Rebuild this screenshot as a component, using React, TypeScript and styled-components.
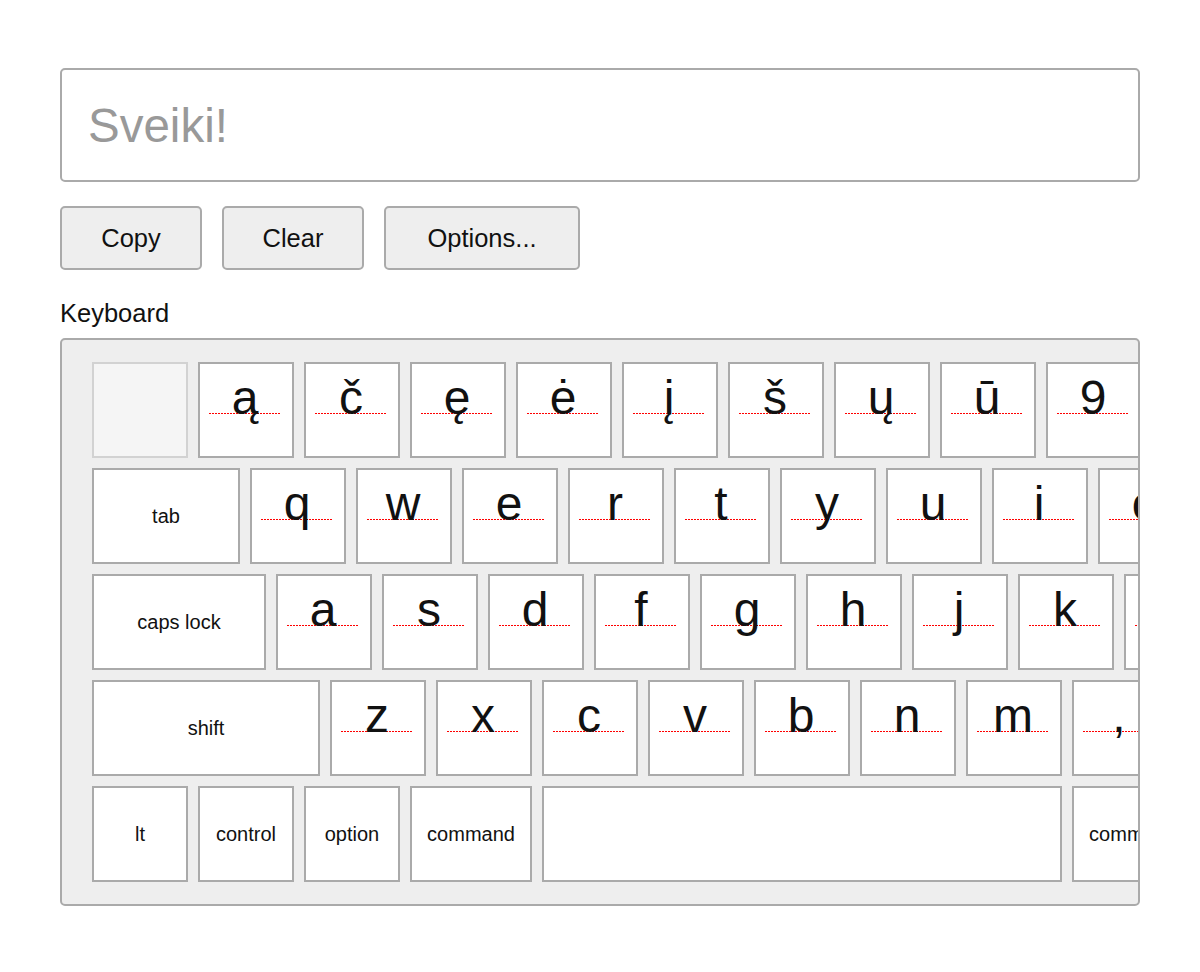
import React from "react";
import styled, { createGlobalStyle } from "styled-components";

type KeyDef = {
  label: string;
  width?: number;
  char?: boolean;
  blank?: boolean;
};

const GlobalStyle = createGlobalStyle`
  body {
    margin: 0;
    background: #fff;
    font-family: "Liberation Sans", Arial, Helvetica, sans-serif;
    color: #111;
  }
`;

const Page = styled.div`
  padding: 68px 60px;
  width: 1080px;
`;

const TextBox = styled.input`
  box-sizing: border-box;
  display: block;
  width: 100%;
  height: 114px;
  padding: 0 26px;
  border: 2px solid #aaa;
  border-radius: 5px;
  font-family: inherit;
  font-size: 47.5px;
  color: #111;
  outline: none;

  &::placeholder {
    color: #999;
  }
`;

const Toolbar = styled.div`
  display: flex;
  gap: 20px;
  margin-top: 24px;
`;

const ActionButton = styled.button<{ $w: number }>`
  box-sizing: border-box;
  width: ${(p) => p.$w}px;
  height: 64px;
  background: #eee;
  border: 2px solid #aaa;
  border-radius: 5px;
  font-family: inherit;
  font-size: 25.5px;
  color: #111;
  padding: 0;
  cursor: pointer;
`;

const SectionLabel = styled.div`
  margin-top: 28px;
  font-size: 25.5px;
  line-height: 30px;
`;

const KeyboardBox = styled.div`
  box-sizing: border-box;
  margin-top: 10px;
  width: 100%;
  padding: 22px 30px;
  background: #eee;
  border: 2px solid #aaa;
  border-radius: 5px;
  overflow: hidden;
  display: flex;
  flex-direction: column;
  gap: 10px;
`;

const KeyRow = styled.div`
  display: flex;
  gap: 10px;
`;

const Key = styled.div<{ $w: number; $char?: boolean; $blank?: boolean }>`
  box-sizing: border-box;
  flex: 0 0 auto;
  width: ${(p) => p.$w}px;
  height: 96px;
  background: ${(p) => (p.$blank ? "#f5f5f5" : "#fff")};
  border: 2px solid ${(p) => (p.$blank ? "#d2d2d2" : "#aaa")};
  display: flex;
  flex-direction: column;
  align-items: ${(p) => (p.$char ? "flex-start" : "center")};
  justify-content: ${(p) => (p.$char ? "flex-start" : "center")};
  font-size: 20px;
  white-space: nowrap;
`;

// the dotted red rule sits right on the glyph baseline
const KeyChar = styled.span`
  display: block;
  width: 72px;
  margin: 17px 0 0 9px;
  font-size: 48px;
  line-height: 33px;
  height: 33px;
  text-align: center;
  color: #111;
  background: linear-gradient(90deg, #f00 2px, transparent 2px) repeat-x
    left bottom / 3px 1px;
`;

const chars = (s: string): KeyDef[] =>
  Array.from(s).map((c) => ({ label: c, char: true }));

// only the keys that show before the box clips the right side
const rows: KeyDef[][] = [
  [{ label: "", blank: true }, ...chars("ąčęėįšųū9")],
  [{ label: "tab", width: 148 }, ...chars("qwertyuio")],
  [{ label: "caps lock", width: 174 }, ...chars("asdfghjkl")],
  [{ label: "shift", width: 228 }, ...chars("zxcvbnm,")],
  [
    { label: "lt" },
    { label: "control" },
    { label: "option" },
    { label: "command", width: 122 },
    { label: "", width: 520 },
    { label: "command", width: 122 },
  ],
];

export default function App() {
  return (
    <>
      <GlobalStyle />
      <Page>
        <TextBox placeholder="Sveiki!" />
        <Toolbar>
          <ActionButton $w={142}>Copy</ActionButton>
          <ActionButton $w={142}>Clear</ActionButton>
          <ActionButton $w={196}>Options...</ActionButton>
        </Toolbar>
        <SectionLabel>Keyboard</SectionLabel>
        <KeyboardBox>
          {rows.map((row, i) => (
            <KeyRow key={i}>
              {row.map((k, j) => (
                <Key
                  key={j}
                  $w={k.width ?? 96}
                  $char={k.char}
                  $blank={k.blank}
                >
                  {k.char ? <KeyChar>{k.label}</KeyChar> : k.label}
                </Key>
              ))}
            </KeyRow>
          ))}
        </KeyboardBox>
      </Page>
    </>
  );
}
